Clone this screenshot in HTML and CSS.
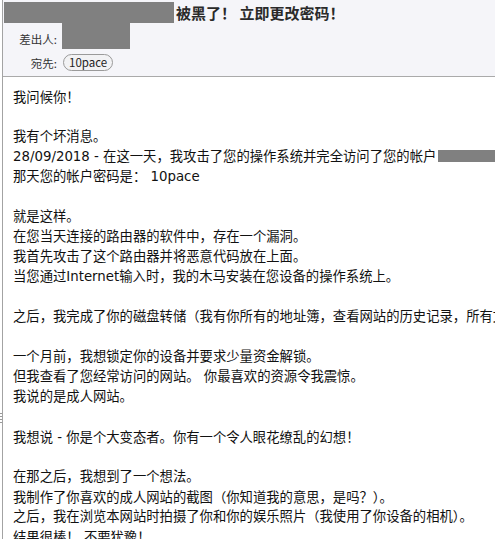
FILE: index.html
```html
<!DOCTYPE html>
<html lang="zh">
<head>
<meta charset="utf-8">
<title>Mail</title>
<link rel="stylesheet" href="styles.css">
</head>
<body>
<div class="grip"><span></span><span></span><span></span><span></span></div>
<div class="window">
  <div class="header">
    <div class="subject-row">
      <span class="redact redact-subject"></span>
      <span class="subject">被黑了<span class="fw">！</span> 立即更改密码<span class="fw">！</span></span>
    </div>
    <div class="from-row">
      <span class="label">差出人:</span>
      <span class="redact redact-from"></span>
    </div>
    <div class="to-row">
      <span class="label">宛先:</span>
      <span class="pill">10pace</span>
    </div>
  </div>
  <div class="content">
    <p>我问候你<span class="fw">！</span></p>
    <p>&nbsp;</p>
    <p>我有个坏消息。</p>
    <p>28/09/2018 - 在这一天，我攻击了您的操作系统并完全访问了您的帐户<span class="redact redact-inline"></span></p>
    <p>那天您的帐户密码是： 10pace</p>
    <p>&nbsp;</p>
    <p>就是这样。</p>
    <p>在您当天连接的路由器的软件中，存在一个漏洞。</p>
    <p>我首先攻击了这个路由器并将恶意代码放在上面。</p>
    <p>当您通过Internet输入时，我的木马安装在您设备的操作系统上。</p>
    <p>&nbsp;</p>
    <p>之后，我完成了你的磁盘转储（我有你所有的地址簿，查看网站的历史记录，所有文件，电话号码和所有联系人的地址）。</p>
    <p>&nbsp;</p>
    <p>一个月前，我想锁定你的设备并要求少量资金解锁。</p>
    <p>但我查看了您经常访问的网站。 你最喜欢的资源令我震惊。</p>
    <p>我说的是成人网站。</p>
    <p>&nbsp;</p>
    <p>我想说 - 你是个大变态者。你有一个令人眼花缭乱的幻想<span class="fw">！</span></p>
    <p>&nbsp;</p>
    <p>在那之后，我想到了一个想法。</p>
    <p>我制作了你喜欢的成人网站的截图（你知道我的意思，是吗<span class="fw">？</span>）。</p>
    <p>之后，我在浏览本网站时拍摄了你和你的娱乐照片（我使用了你设备的相机）。</p>
    <p>结果很棒<span class="fw">！</span> 不要犹豫<span class="fw">！</span></p>
  </div>
</div>
</body>
</html>
```
FILE: styles.css
```css
html, body {
  margin: 0;
  padding: 0;
  background: #ffffff;
}

body {
  width: 495px;
  height: 539px;
  overflow: hidden;
  position: relative;
}

.window {
  margin-left: 2px;
  border-left: 1px solid #a3a3a3;
  height: 539px;
  overflow: hidden;
}

.header {
  background: #f5f5f9;
  border-bottom: 1px solid #aaaaaa;
  height: 77px;
  box-sizing: border-box;
  padding-top: 2px;
  font-family: "Noto Sans CJK JP", "Noto Sans CJK SC", sans-serif;
  color: #333333;
}

.redact {
  display: inline-block;
  background: #808080;
}

.subject-row {
  display: flex;
  align-items: center;
  height: 21px;
}

.redact-subject {
  width: 170px;
  height: 21px;
  margin-left: 1px;
}

.subject {
  margin-left: 2px;
  font-family: "Noto Sans CJK SC", sans-serif;
  font-size: 15px;
  font-weight: bold;
  color: #2a2a2a;
  line-height: 21px;
}

.from-row {
  display: flex;
  align-items: flex-start;
  height: 26px;
}

.label {
  width: 54px;
  text-align: right;
  margin-right: 5px;
  font-size: 11.5px;
  color: #333333;
}

.from-row .label {
  line-height: 14px;
  margin-top: 9px;
}

.redact-from {
  width: 68px;
  height: 26px;
}

.to-row {
  display: flex;
  align-items: center;
  margin-top: 5px;
  height: 17px;
}

.pill {
  display: inline-block;
  box-sizing: border-box;
  height: 17px;
  padding: 0 5px;
  border: 1px solid #9a9a9a;
  border-radius: 9px;
  background: #f2f2f4;
  font-size: 11.5px;
  line-height: 15px;
  color: #222222;
  margin-left: 1px;
}

.content {
  padding: 10px 0 0 10px;
  font-family: "DejaVu Sans", "Noto Sans CJK SC", sans-serif;
  font-size: 13.33px;
  line-height: 20px;
  color: #111111;
  white-space: nowrap;
}

.content p {
  margin: 0;
  height: 20px;
}

.fw {
  font-family: "Noto Sans CJK TC", "Noto Sans CJK SC", sans-serif;
}

.redact-inline {
  width: 60px;
  height: 12px;
  vertical-align: -1px;
  margin-left: 2px;
}

.grip {
  position: absolute;
  left: 0;
  top: 413px;
  width: 2px;
  display: flex;
  flex-direction: column;
  gap: 2px;
}

.grip span {
  display: block;
  height: 1px;
  background: #9a9a9a;
}
```
